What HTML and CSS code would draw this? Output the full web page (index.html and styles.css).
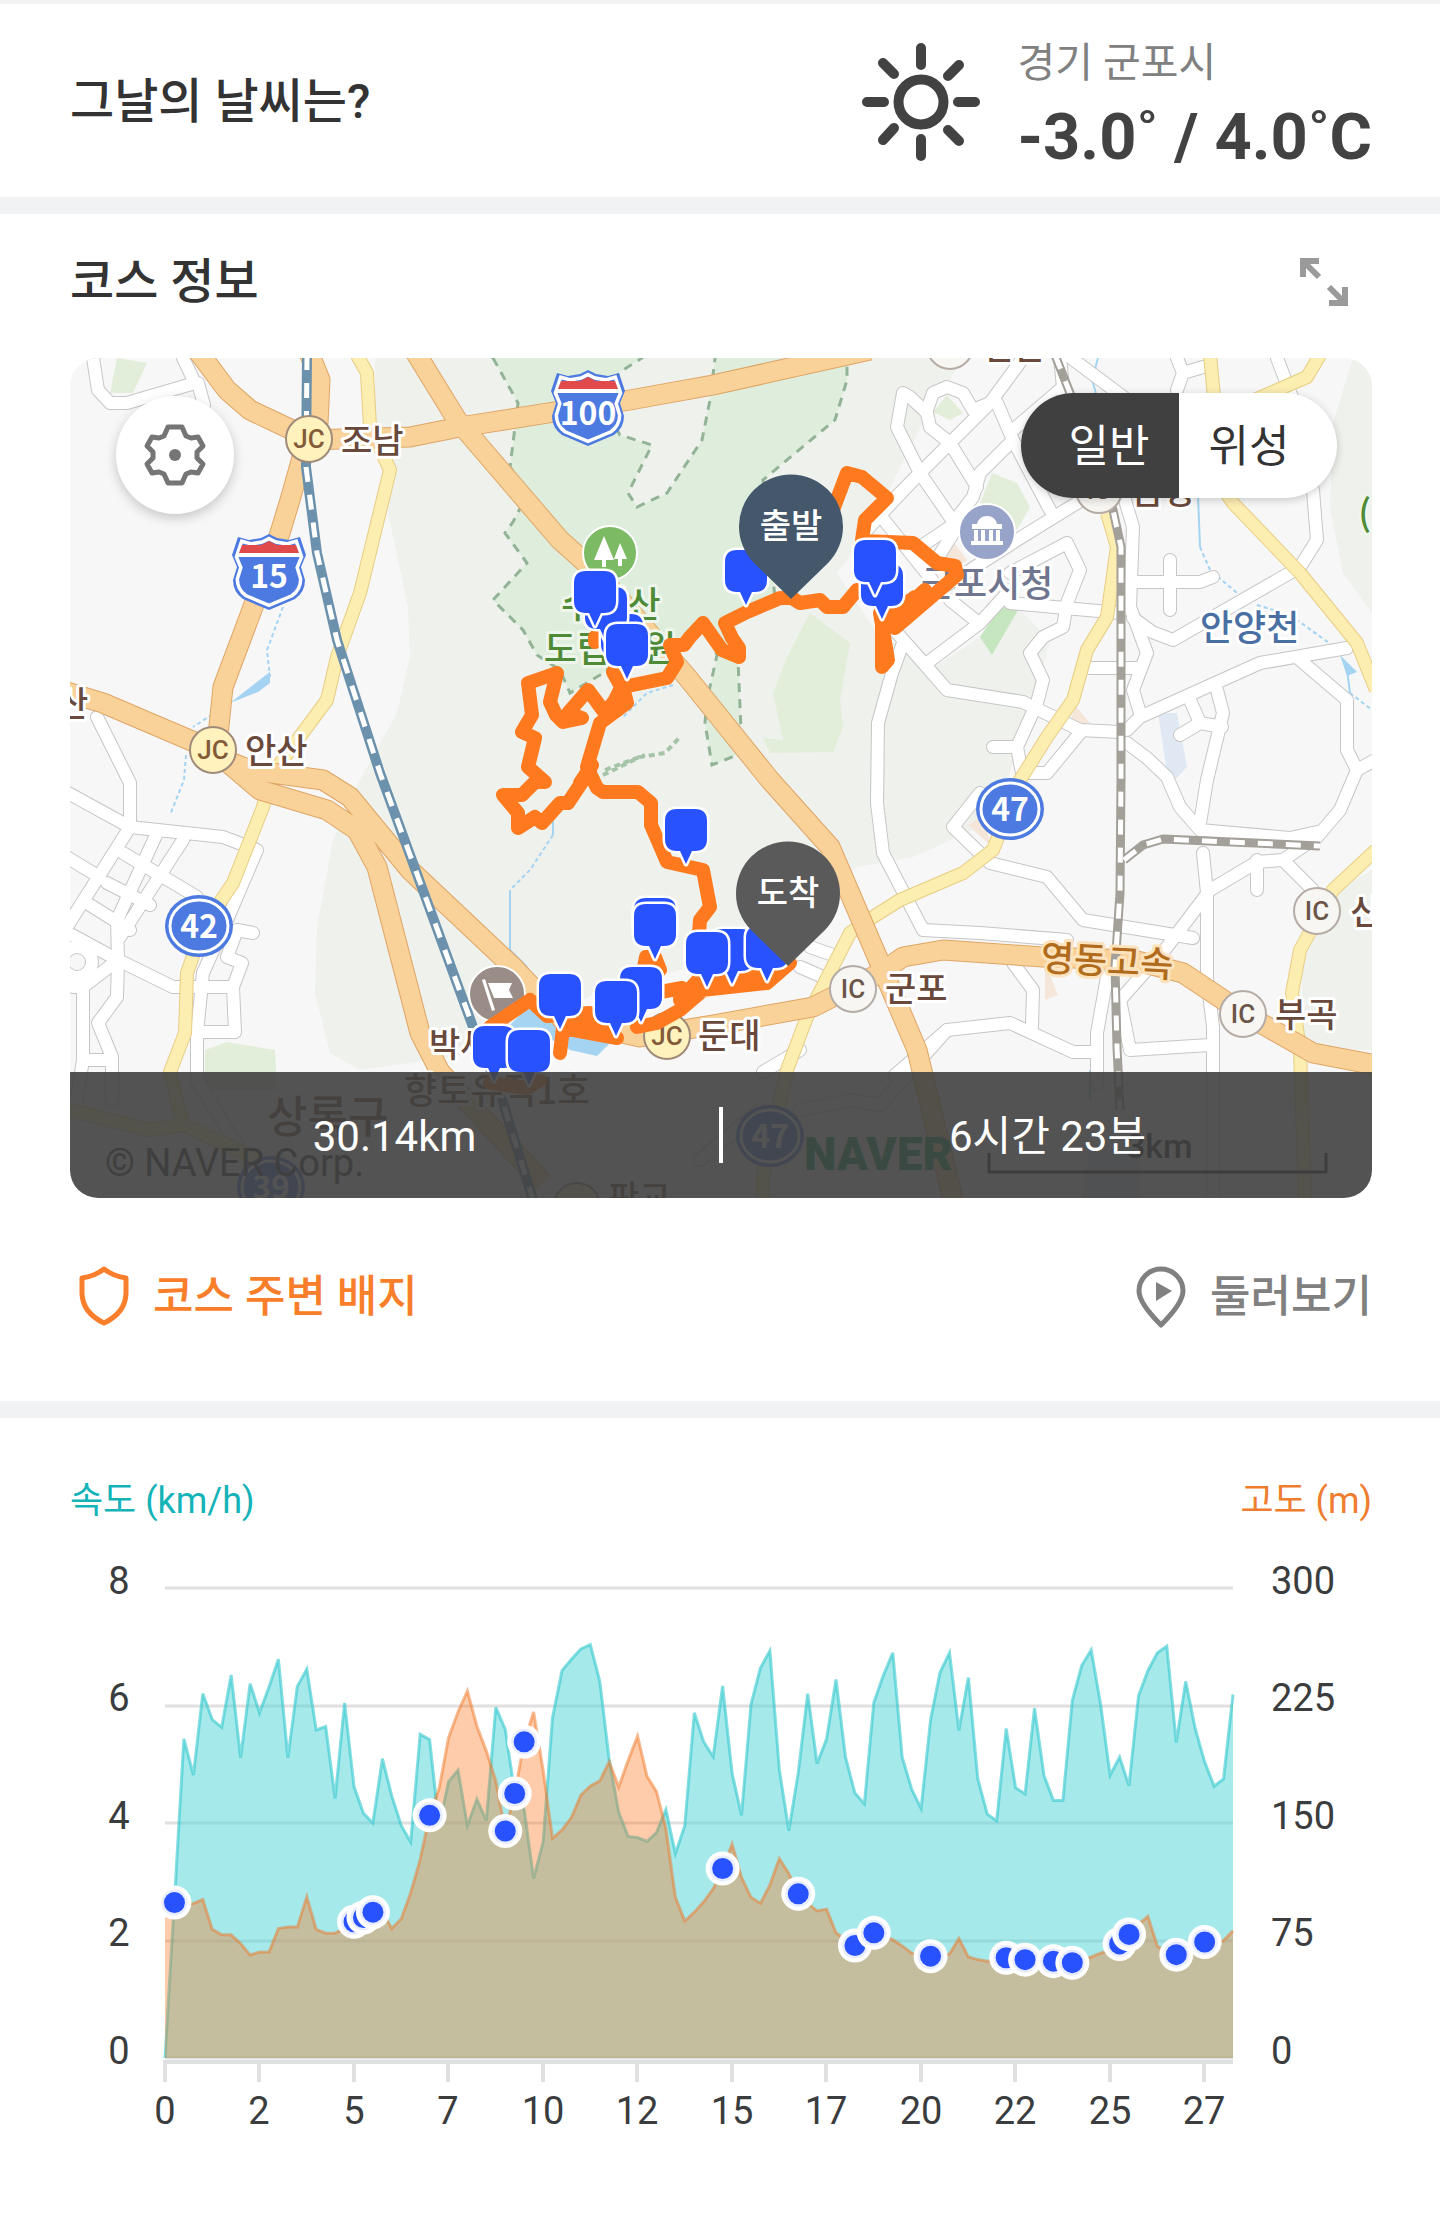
FILE: index.html
```html
<!DOCTYPE html>
<html lang="ko">
<head>
  <meta charset="UTF-8">
  <meta name="viewport" content="width=device-width, initial-scale=1">
  <title>코스 정보</title>
  <link rel="stylesheet" href="styles.css">
</head>
<body>

<section class="weather">
  <h2>그날의 날씨는?</h2>
  <div class="weather-now">
    <svg class="sun" viewBox="-60 -60 120 120">
      <circle r="22.5"/>
      <path d="M0-54V-37M0 37V54M-54 0H-37M37 0H54M-38-39L-27-28M38-37L27-26M-38 38L-27 26M38 39L27 28"/>
    </svg>
    <div>
      <p class="place">경기 군포시</p>
      <p class="temp">-3.0˚ / 4.0˚C</p>
    </div>
  </div>
</section>

<section class="course">
  <div class="course-head">
    <h2>코스 정보</h2>
    <button class="expand" aria-label="확대">
      <svg viewBox="0 0 48 48"><path d="M3 19V3H19M4 4L19 19M45 29V45H29M44 44L29 29"/></svg>
    </button>
  </div>

  <div class="map">
    <svg class="map-canvas" viewBox="70 358 1302 840">
      <defs>
        <g id="streets">
          <path d="M1067 355L1130 402M1023 358L990 403 920 473 893 500 867 530M977 487L950 443 930 427 927 413 910 397 903 393 897 427 920 473 957 527"/>
          <path d="M927 410L933 393 947 387 963 393 973 410M997 403L1013 440 1050 510M1013 440L980 473 973 497 950 527 920 547M1060 358L1063 387 1013 430M990 403L973 410"/>
          <path d="M1085 498L1017 540 950 583 890 615M957 527L930 570M950 600L975 620M920 473L880 515 940 590M1125 500L1133 527 1130 607 1147 653 1133 690 1140 713"/>
          <path d="M1133 618L1152 632 1173 640 1300 567 1317 540 1313 490M1137 582H1200L1213 577M1170 560V610M1347 648L1260 663 1140 717 1127 730M1300 660L1347 700V750L1357 770 1375 760"/>
          <path d="M1357 770L1340 810 1317 837 1283 860 1257 862 1210 890 1167 947 1120 1000 1130 1050 1210 1045M1217 690L1223 713 1207 780 1200 823M1190 700L1200 723 1180 735M1200 723L1222 727"/>
          <path d="M1127 743L1147 758 1167 777 1180 807 1200 830 1290 838 1317 832M1010 573L1067 543 1080 570 1067 603 1063 627 1043 637 1030 653 1043 680 1037 703 1017 747H993M1017 747L1022 773H1047L1080 733"/>
          <path d="M1010 603L1120 613M890 625L927 667 947 690 1023 702 1080 730 1120 732M1090 668H1140M927 663L980 623 1010 590"/>
          <path d="M903 643L892 673 878 723 877 803 883 853 923 930 980 933 1067 940M980 793L953 827 990 863 1047 877 1083 920 1193 938M1203 853L1207 893V977L1213 1027V1198"/>
          <path d="M1257 860V890M1283 860L1313 890M1107 977L1097 1033V1083M1013 963L1033 990 1032 1027M895 1075L947 1030 1010 1023 1073 1052H1097M810 947L833 955M800 967L830 980M763 1072L800 1050"/>
          <path d="M1177 358L1183 373 1177 390M1183 373L1203 367M1277 358L1295 405M93 358L98 390 110 403 127 403 195 383 183 358M198 383L204 405"/>
          <path d="M97 717L130 783V827M68 793L130 827 223 837 257 850 227 920 203 973 197 1033V1080L240 1150M130 827L68 925M157 833L117 920 118 960 117 997 98 1023 112 1057V1100M183 840L120 937"/>
          <path d="M68 858L93 873M123 853L197 897M107 883L150 905M90 905L130 930M72 935L118 960 173 987H233L242 963 227 957 237 930 253 933M233 987L235 1032H197M73 987L83 987V1060H110M83 987L118 960M83 1060L75 1110"/>
          <circle cx="77" cy="962" r="15"/>
          <path d="M700 1160L760 1110M800 1110L850 1100 880 1105 947 1030"/>
        </g>
        <g id="avenues">
          <path d="M357 355L367 373 370 427 390 470 360 593 337 657 327 700 270 777 263 807 233 883 203 927 187 973 185 1033 170 1072 183 1125 150 1130 70 1110M183 1125L260 1160"/>
          <path d="M1210 355L1215 407 1213 473 1233 503 1300 573 1357 643 1376 690M1320 355L1307 377 1250 402M1107 513L1117 547 1107 617 1087 650 1073 700 1047 737 1020 780 993 850 963 873 900 900 873 917 850 933 807 1017 787 1070 763 1177V1198M1376 850L1333 890 1300 950 1292 993 1300 1050 1305 1198"/>
        </g>
        <g id="highways">
          <path d="M197 350L227 390 250 410 307 437M308 350L320 380 318 423 307 440 290 500 280 533 253 607 223 687 217 745M60 690L103 703 213 750 260 790 327 810 357 830 377 867 420 1033 440 1072 543 1183M213 755L250 770 323 780 350 797 410 870 513 967 563 1020 640 1037 713 1025 813 1007 880 973 903 957 943 950 1043 957 1133 960 1183 973 1243 1013 1313 1053 1376 1065"/>
          <path d="M307 440L410 437 460 427 630 400 713 385 870 350M414 350L457 420 560 540 597 573 687 677 770 780 830 847 873 947 917 1050 953 1200"/>
        </g>
        <path id="rail-blue" d="M307 355L306 467 317 553 337 640 380 773 473 1027 500 1093 533 1200"/>
        <g id="rail-gray">
          <path d="M1055 355L1070 393 1113 510 1121 547 1121 780 1120 893 1115 967 1117 1047 1120 1110"/>
          <path d="M1124 860L1143 845 1163 839 1320 846"/>
        </g>
        <path id="shield" d="M0-38L8-34 20-32 31-35 37-17 32-5 36 8Q36 20 26 27L0 38-26 27Q-36 20-36 8L-32-5-37-17-31-35-20-32-8-34Z"/>
        <path id="pin" d="M-9-54H9Q21-54 21-42V-24Q21-12 9-12H6L0 1-6-12H-9Q-21-12-21-24V-42Q-21-54-9-54Z"/>
        <path id="flag-pin" d="M0 73L-37 37A52 52 0 1 1 37 37Z"/>
      </defs>

      <!-- land -->
      <rect class="land" x="70" y="358" width="1302" height="840"/>
      <path class="hill" d="M375 358V423L388 513 408 607 410 657 397 713 360 780 333 840 317 927 315 993 330 1053 360 1070 500 1050 600 990 700 965 760 940 857 867 913 857 980 827 1007 780 1033 707 1050 640 1017 607 980 637 930 670 873 627 837 573 873 527 897 473 923 423 963 358Z"/>
      <path class="hill" d="M1353 358L1333 423 1330 507 1343 573 1372 613V358ZM1372 870L1317 903 1303 960 1300 1050H1372Z"/>
      <path class="park" d="M493 358L518 403 510 467 528 493 513 522 505 533 527 563 493 600 523 630 537 655 560 670 570 693 605 672 625 652 667 645 690 637 703 623 717 655 707 700 705 723 712 765 742 753 738 660 740 645 728 623 775 598 763 480 835 420 847 380V350H716L710 400 702 440 667 493 637 507 628 493 652 445 620 435 600 400 620 372 642 358V350H485Z"/>
      <path class="grove" d="M810 613L850 643 840 700 843 727 833 752 770 753 763 738 783 740 773 693 787 657ZM205 1050L227 1042 275 1050 277 1090H205ZM992 473L1017 483 1030 507 1017 530 980 503ZM117 358L147 363 133 393 110 393ZM933 412L947 395 963 413 950 420Z"/>
      <path class="lawn" d="M1000 607L1018 610 992 655 980 637Z"/>
      <path class="block" d="M935 550L950 537 967 560 957 567ZM1045 965V1000L1058 995 1050 975ZM1075 705L1090 723 1070 725ZM968 825L985 815 990 845Z"/>
      <path class="trail" d="M603 775L640 757 665 753 680 737M605 770L645 755"/>

      <!-- water -->
      <path class="pond" d="M1158 713H1177L1187 767 1173 782 1167 773ZM1090 1150H1140V1198H1082Z"/>
      <path class="lake" d="M527 1008L505 1030 560 1042 570 1050 597 1056 610 1043 567 1033ZM230 703L262 678 270 672V683L258 692ZM1340 655L1357 672 1347 676Z"/>
      <path class="stream" d="M553 820V835M510 890V950L527 967M1098 358L1092 380 1098 400M1198 495L1200 547M1347 670L1350 693M1090 1070V1100"/>
      <path class="stream dotted" d="M283 607L267 650 270 677M230 703L193 727M186 755L184 780 170 815M553 835L530 870 510 890M673 685L647 693 623 717M1200 547L1210 570 1237 593M1257 605L1290 615 1332 645M1350 693L1372 710"/>

      <!-- roads -->
      <use href="#streets" class="road street-edge"/>
      <use href="#streets" class="road street-fill"/>
      <use href="#avenues" class="road avenue-edge"/>
      <use href="#avenues" class="road avenue-fill"/>
      <use href="#highways" class="road highway-edge"/>
      <use href="#highways" class="road highway-fill"/>
      <use href="#rail-gray" class="road rail-gray-edge"/>
      <use href="#rail-gray" class="road rail-dash"/>
      <use href="#rail-blue" class="road rail-blue-edge"/>
      <use href="#rail-blue" class="road rail-dash"/>

      <!-- road numbers -->
      <g class="route-no">
        <g transform="translate(269 572)"><use href="#shield" class="shield-edge"/><use href="#shield" class="shield-body" transform="scale(.88)"/><path class="shield-top" d="M-30-19L-27-27-8-27 0-31 8-27 27-27 30-19Z"/><path class="shield-line" d="M-31-17H31"/><text y="16">15</text></g>
        <g transform="translate(588 408)"><use href="#shield" class="shield-edge"/><use href="#shield" class="shield-body" transform="scale(.88)"/><path class="shield-top" d="M-30-19L-27-27-8-27 0-31 8-27 27-27 30-19Z"/><path class="shield-line" d="M-31-17H31"/><text y="17">100</text></g>
        <g transform="translate(199 926)"><ellipse class="no-edge" rx="34" ry="31"/><ellipse class="no-ring" rx="29" ry="26"/><text y="12">42</text></g>
        <g transform="translate(1010 809)"><ellipse class="no-edge" rx="34" ry="31"/><ellipse class="no-ring" rx="29" ry="26"/><text y="12">47</text></g>
        <g transform="translate(770 1136)"><ellipse class="no-edge" rx="34" ry="31"/><ellipse class="no-ring" rx="29" ry="26"/><text y="12">47</text></g>
        <g transform="translate(271 1187)"><ellipse class="no-edge" rx="34" ry="31"/><ellipse class="no-ring" rx="29" ry="26"/><text y="12">39</text></g>
      </g>

      <!-- junctions -->
      <g class="junction jc">
        <circle cx="309" cy="439" r="23"/><text x="309" y="448">JC</text>
        <circle cx="213" cy="750" r="23"/><text x="213" y="759">JC</text>
        <circle cx="667" cy="1036" r="23"/><text x="667" y="1045">JC</text>
        <circle cx="577" cy="1206" r="23"/>
      </g>
      <g class="junction">
        <circle cx="853" cy="989" r="23"/><text x="853" y="998">IC</text>
        <circle cx="1317" cy="911" r="23"/><text x="1317" y="920">IC</text>
        <circle cx="1243" cy="1014" r="23"/><text x="1243" y="1023">IC</text>
        <circle cx="1099" cy="490" r="23"/><text x="1099" y="499">IC</text>
        <circle cx="950" cy="346" r="23"/>
      </g>

      <!-- places -->
      <g class="poi">
        <circle class="poi-park" cx="610" cy="553" r="27"/>
        <path d="M604 536L614 560H606V567H602V560H594ZM620 543L627 559H622V566H618V559H614Z"/>
        <circle class="poi-hall" cx="987" cy="532" r="28"/>
        <path d="M972 524H977Q979 516 987 516T997 524H1002V529H972ZM974 530H978V541H974ZM981 530H985V541H981ZM989 530H993V541H989ZM996 530H1000V541H996ZM971 541H1003V545H971Z"/>
        <circle class="poi-site" cx="497" cy="994" r="28"/>
        <path d="M482 980L485 979 495 1010 492 1011ZM488 983H512L509 990 513 998H494Z"/>
      </g>
      <g class="place-name">
        <text x="341" y="453">조남</text>
        <text x="245" y="763">안산</text>
        <text x="57" y="716">산</text>
        <text x="698" y="1048">둔대</text>
        <text x="885" y="1001">군포</text>
        <text x="1350" y="924">신갈</text>
        <text x="1275" y="1027">부곡</text>
        <text x="983" y="359">산본</text>
        <text x="1132" y="504">금정</text>
        <text x="429" y="1057">박세</text>
        <text class="site" x="404" y="1104">향토유적1호</text>
        <text x="608" y="1210">판교</text>
      </g>
      <g class="place-name wide">
        <text class="district" x="267" y="1133">상록구</text>
        <text class="express" x="1107" y="974" transform="rotate(3 1107 963)">영동고속</text>
        <text class="river" x="1200" y="641">안양천</text>
        <text class="hall" x="921" y="597">군포시청</text>
        <text class="green" x="611" y="618">수리산</text>
        <text class="green" x="610" y="662">도립공원</text>
        <text class="green" x="1375" y="528">(2</text>
      </g>

      <!-- track -->
      <g class="track">
        <path d="M792 598H780L747 612 725 623 732 638 739 648V657L722 650 703 623 690 637 684 645H670L677 662 667 678 623 687 627 703 600 723 587 767 597 788 603 792H638L651 803V825L667 862 703 870 710 907 700 920 698 947"/>
        <path d="M590 770L568 803H560L542 823 535 817 518 828V813L503 795H522L535 782H545L528 767 535 738 522 732 532 715 528 683 557 673 550 702 556 715 563 722 582 718 568 713 588 690 605 713 623 690 613 672M595 637V642M620 690L608 714M592 765L580 783"/>
        <path d="M792 598L800 603 820 600 827 607H843L857 590M862 540L865 520 887 498 862 477 847 473 833 510M863 541L913 543 937 563 955 566 957 575 895 628 886 618 915 597M882 615V667L888 660 880 613M925 590L890 622"/>
        <path d="M790 963L767 983 702 990 698 965M767 976L715 980 680 1010 657 1023 637 1027M700 978L680 1000 682 988 655 993M643 972L646 957 655 957 660 970M617 1038L563 1028 560 1053M490 1027L530 1000 547 1016 590 1013 617 1038M567 1022L612 1032M490 1083L527 1088 540 1080"/>
      </g>
      <g class="pins">
        <use href="#pin" x="622" y="668"/>
        <use href="#pin" x="606" y="641"/>
        <use href="#pin" x="595" y="625"/>
        <use href="#pin" x="627" y="678"/>
        <use href="#pin" x="746" y="604"/>
        <use href="#pin" x="882" y="618"/>
        <use href="#pin" x="875" y="594"/>
        <use href="#pin" x="686" y="863"/>
        <use href="#pin" x="655" y="952"/>
        <use href="#pin" x="655" y="958"/>
        <use href="#pin" x="641" y="1021"/>
        <use href="#pin" x="616" y="1035"/>
        <use href="#pin" x="732" y="983"/>
        <use href="#pin" x="707" y="986"/>
        <use href="#pin" x="767" y="980"/>
        <use href="#pin" x="560" y="1028"/>
        <use href="#pin" x="494" y="1080"/>
        <use href="#pin" x="529" y="1084"/>
      </g>
      <g class="ends">
        <use href="#flag-pin" class="start" x="791" y="526"/><text x="791" y="538">출발</text>
        <use href="#flag-pin" class="finish" x="788" y="893"/><text x="788" y="905">도착</text>
      </g>

      <!-- map credits and scale -->
      <text class="copyright" x="105" y="1176">© NAVER Corp.</text>
      <text class="naver" x="804" y="1170">NAVER</text>
      <text class="scale-text" x="1126" y="1158">3km</text>
      <path class="scale-bar" d="M989 1153V1172H1326V1153"/>
    </svg>

    <button class="gear" aria-label="지도 설정">
      <svg viewBox="-32 -32 64 64"><path d="M-7-28H7L11-19 16-17 23-18 28-9 22-3V3L28 9 23 18 16 17 11 19 7 28H-7L-11 19-16 17-23 18-28 9-22 3V-3L-28-9-23-18-16-17-11-19Z"/><circle r="6"/></svg>
    </button>
    <div class="map-type">
      <button class="active">일반</button>
      <button>위성</button>
    </div>
    <div class="summary">
      <span>30.14km</span>
      <i></i>
      <span>6시간 23분</span>
    </div>
  </div>

  <div class="actions">
    <button class="badge-btn">
      <svg viewBox="0 0 50 62"><path d="M25 3Q34 10 47 12V28Q46 47 25 57Q4 47 3 28V12Q16 10 25 3Z"/></svg>
      코스 주변 배지
    </button>
    <button class="tour-btn">
      <svg viewBox="0 0 50 62"><path d="M25 59Q3 37 3 25A22 22 0 0 1 47 25Q47 37 25 59Z"/><path class="play" d="M20 16V35L36 25Z"/></svg>
      둘러보기
    </button>
  </div>
</section>

<section class="graph">
  <div class="graph-head">
    <span class="speed">속도 (km/h)</span>
    <span class="altitude">고도 (m)</span>
  </div>
  <svg class="chart" id="chart" viewBox="70 1530 1302 660">
    <path class="grid" d="M165 1589H1233M165 1707H1233M165 1824H1233M165 1942H1233M165 2059H1233"/>
    <path class="axis" d="M163 2063H1233"/>
    <path class="axis" d="M165 2063V2083M259 2063V2083M354 2063V2083M448 2063V2083M543 2063V2083M637 2063V2083M732 2063V2083M826 2063V2083M921 2063V2083M1015 2063V2083M1110 2063V2083M1204 2063V2083"/>
    <g id="plot"></g>
    <g class="labels middle">
      <text x="119" y="1595">8</text>
      <text x="119" y="1712">6</text>
      <text x="119" y="1830">4</text>
      <text x="119" y="1947">2</text>
      <text x="119" y="2065">0</text>
      <text x="165" y="2125">0</text>
      <text x="259" y="2125">2</text>
      <text x="354" y="2125">5</text>
      <text x="448" y="2125">7</text>
      <text x="543" y="2125">10</text>
      <text x="637" y="2125">12</text>
      <text x="732" y="2125">15</text>
      <text x="826" y="2125">17</text>
      <text x="921" y="2125">20</text>
      <text x="1015" y="2125">22</text>
      <text x="1110" y="2125">25</text>
      <text x="1204" y="2125">27</text>
    </g>
    <g class="labels">
      <text x="1271" y="1595">300</text>
      <text x="1271" y="1712">225</text>
      <text x="1271" y="1830">150</text>
      <text x="1271" y="1947">75</text>
      <text x="1271" y="2065">0</text>
    </g>
  </svg>
</section>

<script src="chart.js"></script>
</body>
</html>
```

FILE: styles.css
```css
* {
  box-sizing: border-box;
}
body {
  margin: 0;
  background: #fff;
  color: #333;
  font-family: Roboto, "Noto Sans CJK KR", sans-serif;
}
h2, p {
  margin: 0;
}
h2 {
  font-size: 48px;
  font-weight: 500;
  line-height: 60px;
}
button {
  padding: 0;
  border: 0;
  background: none;
  font: inherit;
  color: inherit;
  cursor: pointer;
}
svg {
  display: block;
}

/* weather */
.weather {
  display: flex;
  align-items: center;
  justify-content: space-between;
  padding: 24px 68px 21px 70px;
  border-top: 4px solid #f1f2f4;
  border-bottom: 17px solid #f1f2f4;
}
.weather-now {
  display: flex;
  align-items: center;
  gap: 36px;
}
.sun {
  width: 120px;
  height: 120px;
  fill: none;
  stroke: #424242;
  stroke-width: 10;
  stroke-linecap: round;
}
.place {
  font-size: 41px;
  line-height: 70px;
  color: #808080;
}
.temp {
  font-size: 65px;
  font-weight: 700;
  line-height: 78px;
  color: #424242;
}

/* course */
.course {
  padding: 0 68px 0 70px;
  border-bottom: 17px solid #f1f2f4;
}
.course-head {
  display: flex;
  align-items: center;
  justify-content: space-between;
  padding: 38px 24px 46px 0;
}
.expand svg {
  width: 48px;
  height: 48px;
  fill: none;
  stroke: #9a9a9a;
  stroke-width: 6;
}
.map {
  position: relative;
  overflow: hidden;
  border-radius: 28px;
}
.map-canvas {
  width: 100%;
  height: auto;
}
.land { fill: #f7f7f7; }
.hill { fill: #eff1ec; }
.park {
  fill: #deeddc;
  stroke: #93b397;
  stroke-width: 3;
  stroke-dasharray: 9 7;
}
.grove { fill: #e3eeda; }
.lawn { fill: #c6e6c0; }
.block { fill: #f5e6da; }
.trail {
  fill: none;
  stroke: #a5c4a8;
  stroke-width: 4;
  stroke-dasharray: 6 4;
}
.pond { fill: #e0e9f3; }
.lake { fill: #a5d3f2; }
.stream {
  fill: none;
  stroke: #a5d3f2;
  stroke-width: 2;
}
.dotted { stroke-dasharray: 4 3; }
.road {
  fill: none;
  stroke-linejoin: round;
}
.street-edge { stroke: #c6c6c6; stroke-width: 14; stroke-linecap: round; }
.street-fill { stroke: #fff; stroke-width: 12; stroke-linecap: round; }
.avenue-edge { stroke: #e8cd83; stroke-width: 14; }
.avenue-fill { stroke: #fcedb1; stroke-width: 12; }
.highway-edge { stroke: #dfa566; stroke-width: 21; }
.highway-fill { stroke: #f9d299; stroke-width: 19; }
.rail-gray-edge { stroke: #a39f99; stroke-width: 9; }
.rail-blue-edge { stroke: #6b91ad; stroke-width: 10; }
.rail-dash { stroke: #fff; stroke-width: 5; stroke-dasharray: 15 13; }

.route-no text {
  fill: #fff;
  font: 700 32px "Noto Sans CJK KR", sans-serif;
  text-anchor: middle;
}
.shield-edge { fill: #4c7ae0; }
.shield-body { fill: #4c7ae0; stroke: #fff; stroke-width: 4; }
.shield-top { fill: #e04a4a; }
.shield-line { stroke: #fff; stroke-width: 4; }
.no-edge { fill: #4c7ae0; }
.no-ring { fill: #4c7ae0; stroke: #fff; stroke-width: 3; }

.junction circle {
  fill: #f8f6f2;
  stroke: #b5aca5;
  stroke-width: 2;
}
.junction text {
  fill: #6b5549;
  font: 500 26px Roboto, sans-serif;
  text-anchor: middle;
}
.jc circle { fill: #fff2bd; stroke: #a08b78; }
.jc text { fill: #835b38; }

.poi circle { stroke: #fff; stroke-width: 2; }
.poi path { fill: #fff; }
.poi .poi-park { fill: #7cba63; }
.poi .poi-hall { fill: #97a3c8; }
.poi .poi-site { fill: #9a8d87; }

.place-name {
  fill: #69493b;
  stroke: #fff;
  stroke-width: 6;
  stroke-linejoin: round;
  paint-order: stroke;
  font: 500 34px "Noto Sans CJK KR", sans-serif;
}
.wide,
.site { font-size: 36px; }
.district { font-size: 44px; }
.express { fill: #b06c1c; stroke: #fce3bd; text-anchor: middle; }
.river { fill: #4a70a3; }
.hall { fill: #70768f; }
.green { fill: #4f8a36; stroke: #eef6ec; text-anchor: middle; }

.track {
  fill: none;
  stroke: #ff7a1f;
  stroke-width: 14;
  stroke-linecap: round;
  stroke-linejoin: round;
}
.pins {
  fill: #2952ff;
  stroke: #fff;
  stroke-width: 5;
  stroke-linejoin: round;
  paint-order: stroke;
}
.start { fill: #45586b; }
.finish { fill: #5a5a5a; }
.ends text {
  fill: #fff;
  font: 500 34px "Noto Sans CJK KR", sans-serif;
  text-anchor: middle;
}
.copyright { fill: #333; font-size: 38px; }
.naver { fill: #03a650; font-size: 46px; font-weight: 900; }
.scale-text { fill: #222; font-size: 34px; font-weight: 500; }
.scale-bar { fill: none; stroke: #222; stroke-width: 3; }

/* controls over the map */
.gear {
  position: absolute;
  top: 38px;
  left: 46px;
  display: grid;
  place-items: center;
  width: 118px;
  height: 118px;
  border-radius: 50%;
  background: #fff;
  box-shadow: 0 4px 12px rgba(0, 0, 0, .2);
}
.gear svg {
  width: 64px;
  height: 64px;
  fill: #757575;
}
.gear path {
  fill: none;
  stroke: #757575;
  stroke-width: 5;
  stroke-linejoin: round;
}
.map-type {
  position: absolute;
  top: 35px;
  right: 35px;
  display: flex;
  overflow: hidden;
  border-radius: 53px;
  background: #fff;
  box-shadow: 0 2px 8px rgba(0, 0, 0, .2);
  font-size: 44px;
  line-height: 101px;
}
.map-type button {
  width: 158px;
  padding: 4px 18px 0 0;
}
.map-type .active {
  padding: 4px 0 0 18px;
  background: #404040;
  color: #fff;
}
.summary {
  position: absolute;
  right: 0;
  bottom: 0;
  left: 0;
  display: flex;
  align-items: center;
  background: rgba(64, 64, 64, .9);
  color: #fff;
  font-size: 42px;
  line-height: 122px;
}
.summary span {
  flex: 1;
  padding-top: 4px;
  text-align: center;
}
.summary i {
  width: 4px;
  height: 56px;
  background: #fff;
}

.actions {
  display: flex;
  align-items: center;
  justify-content: space-between;
  padding: 68px 0 73px 9px;
  font-size: 44px;
  font-weight: 500;
  line-height: 62px;
}
.actions button {
  display: flex;
  align-items: center;
  gap: 24px;
}
.actions svg {
  height: 62px;
  fill: none;
  stroke: currentColor;
  stroke-width: 5;
  stroke-linejoin: round;
}
.actions .play {
  fill: currentColor;
  stroke: none;
}
.badge-btn { color: #f97e2b; }
.tour-btn { color: #808080; }

/* graph */
.graph {
  padding: 55px 68px 47px 70px;
}
.graph-head {
  display: flex;
  justify-content: space-between;
  font-size: 36px;
  line-height: 56px;
}
.speed { color: #14b3b8; }
.altitude { color: #ee7d30; }
.chart {
  width: 100%;
  height: auto;
}
.grid { stroke: #e0e0e0; stroke-width: 3; }
.axis { stroke: #e0e0e0; stroke-width: 4; }
.labels {
  fill: #3a3c3e;
  font-size: 38px;
}
.middle { text-anchor: middle; }
.speed-area { fill: rgba(75, 211, 215, .5); }
.speed-line {
  fill: none;
  stroke: rgba(50, 200, 205, .6);
  stroke-width: 3;
}
.alt-area { fill: rgba(255, 115, 22, .36); }
.alt-line {
  fill: none;
  stroke: rgba(240, 120, 40, .5);
  stroke-width: 3;
}
.dot-edge { fill: #fff; }
.dot-ring { fill: #e8ecff; }
.dot { fill: #2952ff; }
```

FILE: chart.js
```js
// sample depth below the top of the plot: 76 is the top gridline, 1304 the baseline
const speed = [
  1304, 890, 470, 565, 352, 420, 440, 303, 520, 326, 402, 335, 262, 520, 333, 288, 447, 438, 626, 376,
  595, 665, 690, 522, 620, 697, 740, 458, 472, 700, 582, 552, 697, 628, 684, 388, 445, 610, 655, 835,
  740, 415, 292, 262, 235, 224, 320, 525, 662, 725, 728, 738, 715, 655, 770, 697, 402, 478, 517, 332,
  560, 670, 380, 285, 240, 550, 710, 560, 352, 535, 470, 315, 518, 612, 640, 376, 305, 245, 518, 602,
  652, 420, 297, 245, 448, 310, 575, 667, 684, 443, 598, 614, 390, 566, 631, 631, 370, 278, 238, 382,
  565, 518, 593, 358, 292, 245, 228, 480, 320, 443, 530, 594, 575, 354
];
const altitude = [
  925, 898, 902, 900, 890, 968, 982, 982, 1005, 1035, 1027, 1027, 966, 962, 962, 883, 968, 978, 978, 965,
  948, 937, 923, 922, 966, 940, 872, 785, 670, 600, 468, 400, 345, 437, 502, 580, 711, 613, 478, 400,
  552, 730, 708, 676, 617, 593, 580, 530, 596, 527, 463, 568, 608, 705, 884, 946, 923, 896, 862, 809,
  745, 832, 884, 900, 852, 783, 822, 875, 900, 920, 915, 977, 995, 1010, 990, 977, 985, 995, 1011, 1030,
  1035, 1038, 1040, 1032, 992, 1040, 1047, 1051, 1047, 1042, 1045, 1047, 1048, 1050, 1051, 1053, 1055, 1048, 1040, 1030,
  1022, 1006, 981, 955, 934, 1012, 1025, 1034, 1025, 1012, 1001, 1005, 997, 972
];
// samples where a photo was taken
const stops = [1, 20, 21, 22, 28, 36, 37, 38, 59, 67, 73, 75, 81, 89, 91, 94, 96, 101, 102, 107, 110];

const left = 165, right = 1233, top_ = 1589, bottom = 2059;
const px = i => left + i * (right - left) / (speed.length - 1);
const py = v => top_ + (v - 76) * (bottom - top_) / (1304 - 76);

function add(tag, cls, attrs) {
  const el = document.createElementNS("http://www.w3.org/2000/svg", tag);
  el.setAttribute("class", cls);
  for (const k in attrs) el.setAttribute(k, attrs[k]);
  document.getElementById("plot").appendChild(el);
}

function drawSeries(data, name) {
  const pts = data.map((v, i) => px(i).toFixed(1) + "," + py(v).toFixed(1)).join(" ");
  add("polygon", name + "-area", { points: `${left},${bottom} ${pts} ${right},${bottom}` });
  add("polyline", name + "-line", { points: pts });
}

drawSeries(speed, "speed");
drawSeries(altitude, "alt");

stops.forEach(i => {
  const at = { cx: px(i), cy: py(altitude[i]) };
  add("circle", "dot-edge", { ...at, r: 17 });
  add("circle", "dot-ring", { ...at, r: 13 });
  add("circle", "dot", { ...at, r: 10.5 });
});
```
